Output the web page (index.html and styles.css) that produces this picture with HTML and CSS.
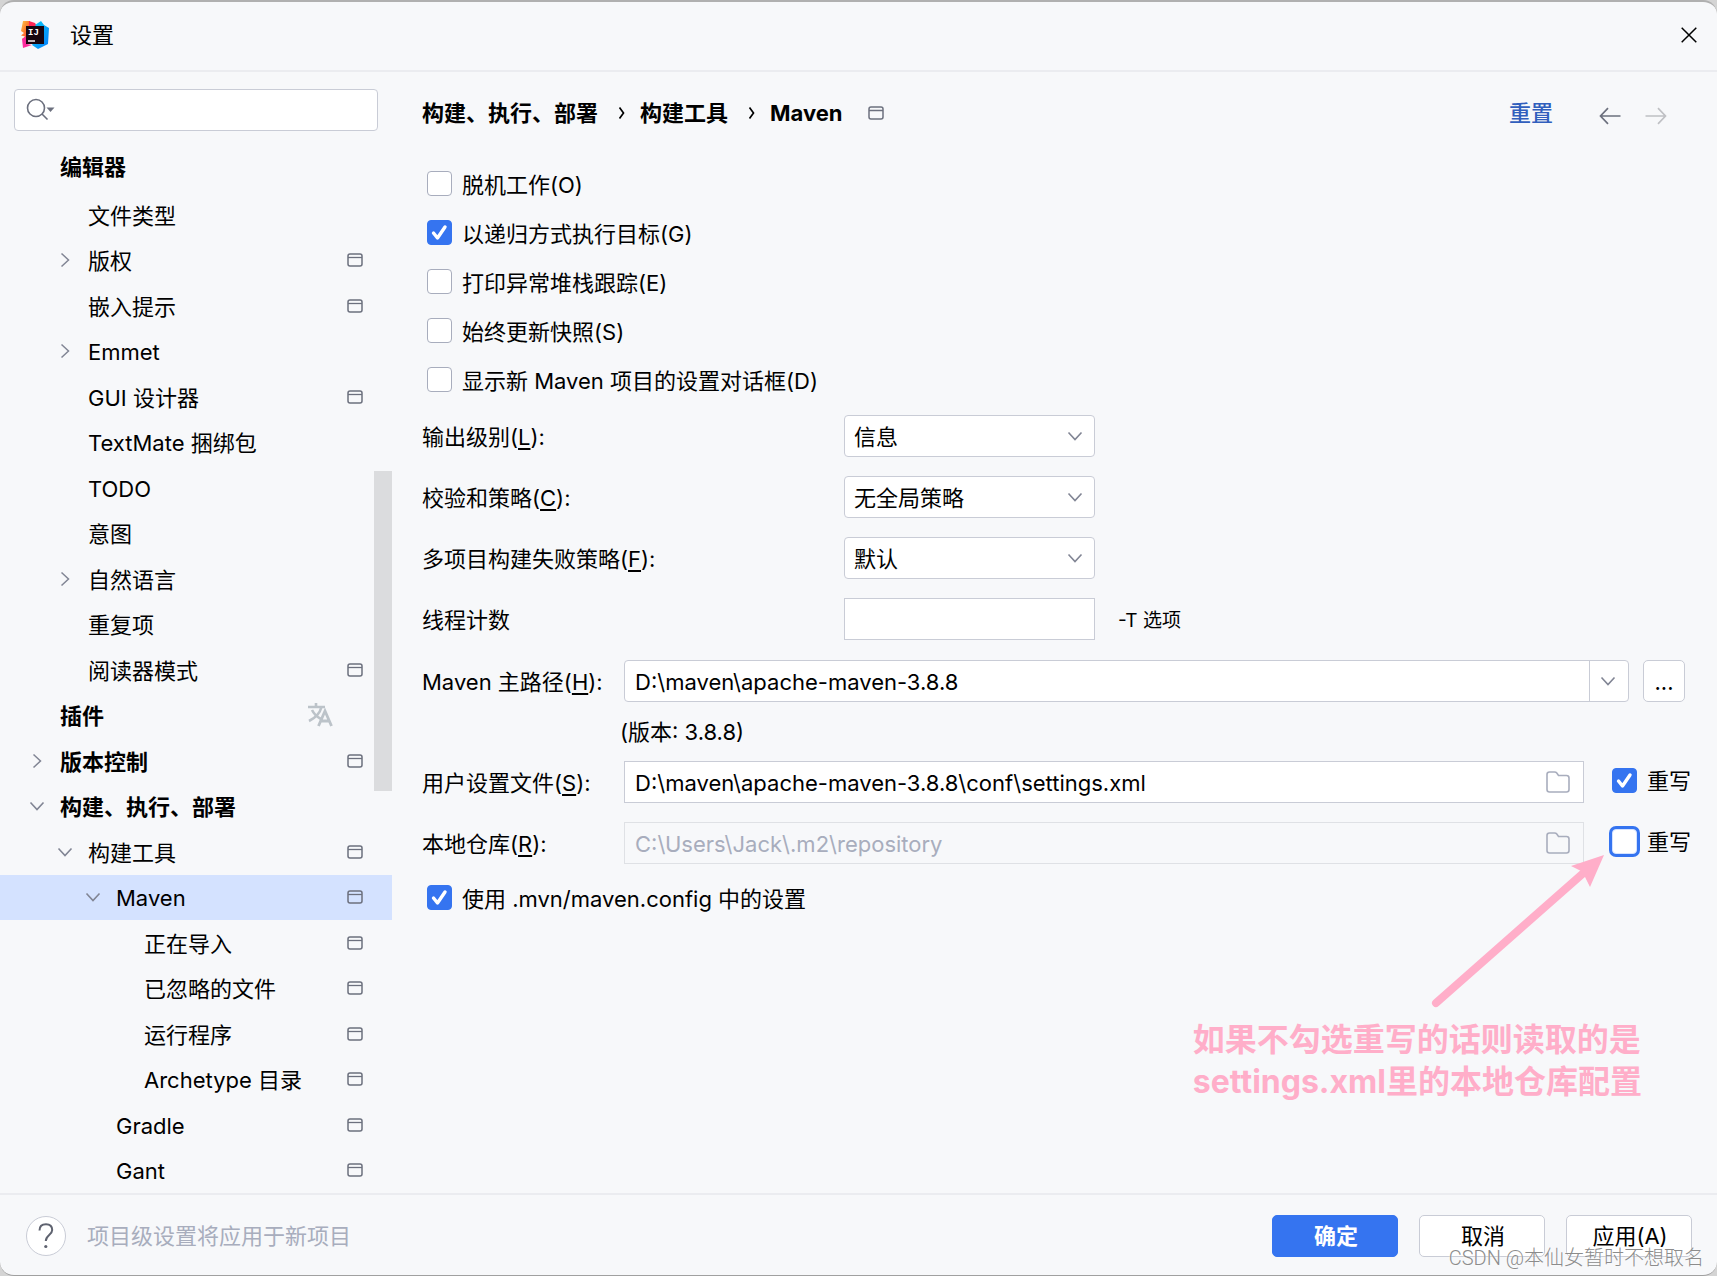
FILE: index.html
```html
<!DOCTYPE html>
<html lang="zh-CN">
<head>
<meta charset="utf-8">
<title>设置</title>
<link rel="stylesheet" href="styles.css">
</head>
<body>
<svg class="defs" aria-hidden="true">
  <symbol id="i-project" viewBox="0 0 16 14"><rect x="1" y="1" width="14" height="12" rx="2" fill="none" stroke="currentColor" stroke-width="1.5"/><path d="M1 4.500h14" stroke="currentColor" stroke-width="1.3"/></symbol>
  <symbol id="i-right" viewBox="0 0 16 16"><path d="M4.500 1.500l7 6.500-7 6.500" fill="none" stroke="currentColor" stroke-width="1.5"/></symbol>
  <symbol id="i-down" viewBox="0 0 16 16"><path d="M1.500 4.500l6.500 7 6.500-7" fill="none" stroke="currentColor" stroke-width="1.6"/></symbol>
  <symbol id="i-crumb" viewBox="0 0 8 14"><path d="M1.500 1.500l4 5.500-4 5.500" fill="none" stroke="currentColor" stroke-width="1.7"/></symbol>
  <symbol id="i-folder" viewBox="0 0 24 22"><path d="M1 3.500Q1 1 3.500 1H8.500Q10 1 10.800 2L12.500 4.500H20.500Q23 4.500 23 7V18.500Q23 21 20.500 21H3.500Q1 21 1 18.500Z" fill="none" stroke="currentColor" stroke-width="1.6"/></symbol>
</svg>

<div class="window">
  <header class="titlebar">
    <svg class="logo" viewBox="0 0 28 28" aria-hidden="true">
      <defs>
        <linearGradient id="lg-a" x1="0" y1="0" x2="1" y2="1"><stop offset="0" stop-color="#fdc94b"/><stop offset=".5" stop-color="#fc7a2e"/><stop offset="1" stop-color="#fe2857"/></linearGradient>
        <linearGradient id="lg-b" x1="0" y1="0" x2="1" y2="1"><stop offset="0" stop-color="#08d0f5"/><stop offset="1" stop-color="#077cfb"/></linearGradient>
      </defs>
      <path d="M2 0L9 0 9 6 6 18 1 18 4 15.500 0 14.500 3 12 0 10Z" fill="url(#lg-a)"/>
      <path d="M8 0L14 2 17 7 8 7Z" fill="#fe2857"/>
      <path d="M14 4L20 0 23 4 28 7 27 23 17 28 11 24 20 10Z" fill="url(#lg-b)"/>
      <path d="M1 18L6 15 6 23 11 24 2 27Z" fill="#fb2c9c"/>
      <rect x="5" y="5" width="18" height="18" fill="#17060f"/>
      <text x="7" y="14" class="logo-text">IJ</text>
      <rect x="7" y="19" width="7" height="2" fill="#bdb3b8"/>
    </svg>
    <h1 class="title">设置</h1>
    <button class="icon-btn close" type="button" aria-label="关闭"><svg width="16" height="16" viewBox="0 0 16 16"><path d="M.7.7l14.600 14.600M15.300.7L.7 15.300" stroke="#000" stroke-width="1.500"/></svg></button>
  </header>

  <div class="body">
    <aside class="sidebar">
      <label class="search">
        <svg width="30" height="24" viewBox="0 0 30 24"><circle cx="10" cy="10" r="8.500" fill="none" stroke="#6c707e" stroke-width="1.600"/><path d="M16 16l5.500 5.500" stroke="#6c707e" stroke-width="1.600"/><path d="M20.500 9.500h8l-4 4.500z" fill="#6c707e"/></svg>
        <input type="text" aria-label="搜索">
      </label>
      <nav class="tree" aria-label="设置类别">
        <div class="group"><span class="name">编辑器</span></div>
        <ul class="rows">
          <li class="row l1"><span class="tw"></span><span class="name">文件类型</span></li>
          <li class="row l1"><span class="tw"><svg class="chev"><use href="#i-right"/></svg></span><span class="name">版权</span><svg class="proj"><use href="#i-project"/></svg></li>
          <li class="row l1"><span class="tw"></span><span class="name">嵌入提示</span><svg class="proj"><use href="#i-project"/></svg></li>
          <li class="row l1"><span class="tw"><svg class="chev"><use href="#i-right"/></svg></span><span class="name">Emmet</span></li>
          <li class="row l1"><span class="tw"></span><span class="name">GUI 设计器</span><svg class="proj"><use href="#i-project"/></svg></li>
          <li class="row l1"><span class="tw"></span><span class="name">TextMate 捆绑包</span></li>
          <li class="row l1"><span class="tw"></span><span class="name">TODO</span></li>
          <li class="row l1"><span class="tw"></span><span class="name">意图</span></li>
          <li class="row l1"><span class="tw"><svg class="chev"><use href="#i-right"/></svg></span><span class="name">自然语言</span></li>
          <li class="row l1"><span class="tw"></span><span class="name">重复项</span></li>
          <li class="row l1"><span class="tw"></span><span class="name">阅读器模式</span><svg class="proj"><use href="#i-project"/></svg></li>
          <li class="row top"><span class="tw"></span><span class="name">插件</span><svg class="lang" viewBox="0 0 25 24"><path d="M0 4h17M8 0v4M13.500 4C12 10 7 15 1 18M4 7c2 4 5 7 9 9" fill="none" stroke="#bcc3c9" stroke-width="2.600"/><path d="M10.500 23L17 8l6.500 15M13 18h8.500" fill="none" stroke="#bcc3c9" stroke-width="2.800"/></svg></li>
          <li class="row top"><span class="tw"><svg class="chev"><use href="#i-right"/></svg></span><span class="name">版本控制</span><svg class="proj"><use href="#i-project"/></svg></li>
          <li class="row top"><span class="tw"><svg class="chev"><use href="#i-down"/></svg></span><span class="name">构建、执行、部署</span></li>
          <li class="row l1"><span class="tw"><svg class="chev"><use href="#i-down"/></svg></span><span class="name">构建工具</span><svg class="proj"><use href="#i-project"/></svg></li>
          <li class="row l2 selected"><span class="tw"><svg class="chev"><use href="#i-down"/></svg></span><span class="name">Maven</span><svg class="proj"><use href="#i-project"/></svg></li>
          <li class="row l3"><span class="tw"></span><span class="name">正在导入</span><svg class="proj"><use href="#i-project"/></svg></li>
          <li class="row l3"><span class="tw"></span><span class="name">已忽略的文件</span><svg class="proj"><use href="#i-project"/></svg></li>
          <li class="row l3"><span class="tw"></span><span class="name">运行程序</span><svg class="proj"><use href="#i-project"/></svg></li>
          <li class="row l3"><span class="tw"></span><span class="name">Archetype 目录</span><svg class="proj"><use href="#i-project"/></svg></li>
          <li class="row l2"><span class="tw"></span><span class="name">Gradle</span><svg class="proj"><use href="#i-project"/></svg></li>
          <li class="row l2"><span class="tw"></span><span class="name">Gant</span><svg class="proj"><use href="#i-project"/></svg></li>
        </ul>
        <div class="thumb"></div>
      </nav>
    </aside>

    <main class="main">
      <div class="head">
        <div class="crumbs">
          <span>构建、执行、部署</span><svg class="sep"><use href="#i-crumb"/></svg><span>构建工具</span><svg class="sep"><use href="#i-crumb"/></svg><span>Maven</span><svg class="proj"><use href="#i-project"/></svg>
        </div>
        <a class="reset" href="#">重置</a>
        <div class="history">
          <button class="icon-btn" type="button" aria-label="后退"><svg width="22" height="18" viewBox="0 0 22 18"><path d="M21.500 9H1.500M9 1.200L1.500 9 9 16.800" fill="none" stroke="#6c707e" stroke-width="1.700"/></svg></button>
          <button class="icon-btn" type="button" aria-label="前进" disabled><svg width="22" height="18" viewBox="0 0 22 18"><path d="M.5 9h20M13 1.200L20.500 9 13 16.800" fill="none" stroke="#bfc0c4" stroke-width="1.700"/></svg></button>
        </div>
      </div>

      <form class="form">
        <label class="check"><input type="checkbox"><span>脱机工作(O)</span></label>
        <label class="check"><input type="checkbox" checked><span>以递归方式执行目标(G)</span></label>
        <label class="check"><input type="checkbox"><span>打印异常堆栈跟踪(E)</span></label>
        <label class="check"><input type="checkbox"><span>始终更新快照(S)</span></label>
        <label class="check"><input type="checkbox"><span>显示新 Maven 项目的设置对话框(D)</span></label>

        <div class="fields">
          <div class="field short">
            <label for="level">输出级别(<u>L</u>):</label>
            <div class="select"><select id="level"><option>信息</option></select><svg class="chev"><use href="#i-down"/></svg></div>
          </div>
          <div class="field short">
            <label for="checksum">校验和策略(<u>C</u>):</label>
            <div class="select"><select id="checksum"><option>无全局策略</option></select><svg class="chev"><use href="#i-down"/></svg></div>
          </div>
          <div class="field short">
            <label for="fail">多项目构建失败策略(<u>F</u>):</label>
            <div class="select"><select id="fail"><option>默认</option></select><svg class="chev"><use href="#i-down"/></svg></div>
          </div>
          <div class="field short">
            <label for="threads">线程计数</label>
            <input class="box" id="threads" type="text">
            <span class="hint">-T 选项</span>
          </div>
        </div>
        <div class="fields paths">
          <div class="field path">
            <label for="home">Maven 主路径(<u>H</u>):</label>
            <div class="combo">
              <div class="box round"><input id="home" type="text" value="D:\maven\apache-maven-3.8.8"><button type="button" aria-label="展开"><svg class="chev"><use href="#i-down"/></svg></button></div>
              <button class="browse" type="button">...</button>
            </div>
          </div>
        </div>
        <p class="version">(版本: 3.8.8)</p>
        <div class="fields files">
          <div class="field file">
            <label for="settings">用户设置文件(<u>S</u>):</label>
            <div class="box"><input id="settings" type="text" value="D:\maven\apache-maven-3.8.8\conf\settings.xml"><svg class="folder"><use href="#i-folder"/></svg></div>
            <label class="override"><input type="checkbox" checked><span>重写</span></label>
          </div>
          <div class="field file">
            <label for="repo">本地仓库(<u>R</u>):</label>
            <div class="box off"><input id="repo" type="text" value="C:\Users\Jack\.m2\repository" disabled><svg class="folder"><use href="#i-folder"/></svg></div>
            <label class="override"><input class="focused" type="checkbox"><span>重写</span></label>
          </div>
        </div>
        <label class="check last"><input type="checkbox" checked><span>使用 .mvn/maven.config 中的设置</span></label>
      </form>

      <div class="note">
        <svg class="arrow" viewBox="0 0 176 156" aria-hidden="true"><path d="M6 150L158 16" stroke="#ffaec9" stroke-width="8" stroke-linecap="round"/><path d="M174 2L141 13 151 18 155 24 160 34Z" fill="#ffaec9"/></svg>
        <p>如果不勾选重写的话则读取的是<br>settings.xml里的本地仓库配置</p>
      </div>
    </main>
  </div>

  <footer class="footer">
    <button class="help" type="button" aria-label="帮助"><svg width="16" height="26" viewBox="0 0 16 26"><path d="M1.500 7.500C1.500 3.500 4 1.200 8 1.200s6.200 2.400 6.200 5.800c0 5-6.400 5.200-6.400 11" fill="none" stroke="#5f6370" stroke-width="2"/><circle cx="7.800" cy="23.500" r="1.600" fill="#5f6370"/></svg></button>
    <span class="status">项目级设置将应用于新项目</span>
    <button class="btn primary" type="button">确定</button>
    <button class="btn" type="button">取消</button>
    <button class="btn" type="button">应用(A)</button>
  </footer>
  <div class="watermark">CSDN @本仙女暂时不想取名</div>
</div>
</body>
</html>
```

FILE: styles.css
```css
:root {
  --bg: #f7f8fa;
  --line: #ebecf0;
  --border: #c9ccd6;
  --icon: #6c707e;
  --blue: #3574f0;
  --muted: #a8adbd;
}

* { box-sizing: border-box; }

body {
  margin: 0;
  background: #d4d4d4;
  color: #000;
  font: 22px/32px Inter, "Noto Sans CJK SC", sans-serif;
}

button, input, select { font: inherit; color: inherit; }
button { padding: 0; }
h1, p, ul { margin: 0; padding: 0; font: inherit; }
.defs { display: none; }

.window {
  position: relative;
  display: flex;
  flex-direction: column;
  height: 100vh;
  min-height: 1000px;
  overflow: hidden;
  background: var(--bg);
  border-top: 2px solid #b0b0b0;
  border-bottom: 1px solid #a0a0a0;
  border-radius: 14px;
}

/* title bar */
.titlebar {
  display: flex;
  align-items: center;
  height: 70px;
  padding: 0 20px 2px 21px;
  border-bottom: 2px solid var(--line);
}
.logo { width: 28px; height: 28px; }
.logo-text { font: bold 9px "Liberation Mono", monospace; fill: #fff; }
.title { margin-left: 21px; }
.icon-btn { display: flex; border: 0; background: none; }
.close { margin-left: auto; }

.body { display: flex; flex: 1; min-height: 0; }

/* sidebar */
.sidebar { display: flex; flex-direction: column; width: 392px; }
.search {
  display: flex;
  align-items: center;
  height: 42px;
  margin: 17px 14px 0;
  padding: 0 11px;
  background: #fff;
  border: 1px solid var(--border);
  border-radius: 4px;
}
.search input { flex: 1; min-width: 0; border: 0; outline: 0; background: none; }
.tree {
  position: relative;
  display: flex;
  flex: 1;
  flex-direction: column;
  min-height: 0;
  padding-top: 11px;
}
.group { height: 50px; padding-left: 60px; line-height: 50px; font-weight: 700; }
.rows { display: flex; flex: 1; flex-direction: column; list-style: none; }
.row { display: flex; flex: 1; align-items: center; padding: 0 29px 0 23px; }
.l1 { padding-left: 51px; }
.l2 { padding-left: 79px; }
.l3 { padding-left: 107px; }
.top .name { font-weight: 700; }
.selected { background: #d4e2ff; }
.tw { display: flex; justify-content: center; width: 28px; margin-right: 9px; }
.name { flex: 1; white-space: nowrap; }
.row .name, .check span, .field > label:first-child { padding-top: 2px; }
.chev { width: 16px; height: 16px; color: #818594; }
.proj { width: 16px; height: 14px; color: var(--icon); }
.lang { width: 25px; height: 24px; margin-right: 30px; }
.thumb {
  position: absolute;
  top: 32%;
  right: 0;
  width: 18px;
  height: 320px;
  background: rgba(0, 0, 0, .11);
}

/* settings page */
.main { position: relative; flex: 1; min-width: 0; padding: 0 25px 0 30px; }
.head { display: flex; align-items: center; height: 82px; padding-right: 25px; }
.crumbs { display: flex; flex: 1; align-items: center; font-weight: 700; }
.sep { width: 8px; height: 14px; margin: 0 14px 0 20px; }
.crumbs .proj { margin-left: 25px; }
.reset { color: #315fbd; font-weight: 500; text-decoration: none; }
.history { display: flex; gap: 24px; margin-left: 46px; padding-top: 5px; }

.form { display: flex; flex-direction: column; padding-top: 5px; }
.check { display: flex; align-items: center; height: 49px; padding-left: 5px; }
.last { margin-top: 9px; }

input[type="checkbox"] {
  flex: none;
  appearance: none;
  width: 25px;
  height: 25px;
  margin: 0 10px 0 0;
  background: #fff;
  border: 1px solid #a8adbd;
  border-radius: 4px;
}
input[type="checkbox"]:checked {
  border-color: var(--blue);
  background: var(--blue) url("data:image/svg+xml,%3Csvg xmlns='http://www.w3.org/2000/svg' viewBox='0 0 25 25'%3E%3Cpath d='M6.500 13l4 5L18 7' fill='none' stroke='white' stroke-width='3.400' stroke-linecap='round' stroke-linejoin='round'/%3E%3C/svg%3E") center / 25px 25px;
}
input[type="checkbox"].focused { border-color: #d4e2ff; box-shadow: 0 0 0 3px var(--blue); }

.fields { display: flex; flex-direction: column; gap: 19px; margin-top: 11px; }
.field { display: grid; align-items: center; height: 42px; }
.short { grid-template-columns: 422px 251px 1fr; }
.path { grid-template-columns: 202px 1fr; }
.file { grid-template-columns: 202px 1fr 108px; }
.field u { text-underline-offset: 3px; }

.box, .select select {
  display: flex;
  align-items: center;
  width: 100%;
  min-width: 0;
  height: 42px;
  padding: 0 10px;
  background: #fff;
  border: 1px solid var(--border);
  border-radius: 0;
}
.box input { flex: 1; min-width: 0; height: 34px; padding: 2px 0 0; border: 0; background: none; }
.select { display: grid; align-items: center; }
.select > * { grid-area: 1 / 1; }
.select select { appearance: none; padding: 1px 9px 0; border-radius: 4px; }
.select .chev { justify-self: end; margin-right: 12px; pointer-events: none; }
.hint { padding: 3px 0 0 23px; font-size: 19px; }

.combo { display: flex; gap: 14px; padding-right: 7px; }
.round { flex: 1; border-radius: 4px; padding-right: 0; }
.round button {
  display: flex;
  align-items: center;
  justify-content: center;
  width: 39px;
  height: 40px;
  padding-right: 2px;
  border: 0;
  border-left: 1px solid var(--border);
  background: none;
}
.browse {
  width: 42px;
  height: 42px;
  padding-top: 2px;
  background: #fff;
  border: 1px solid var(--border);
  border-radius: 5px;
}

.paths { margin-top: 20px; }
.version { height: 59px; padding-left: 198px; line-height: 60px; }
.files { margin-top: 0; }
.folder { width: 24px; height: 22px; margin-right: 3px; color: #a8adbd; }
.off { background: none; border-color: #dfe1e5; color: var(--muted); }
.override { display: flex; align-items: center; padding: 0 0 3px 28px; white-space: nowrap; }

/* annotation over the page */
.note { position: absolute; right: 75px; bottom: 90px; color: #ffaec9; }
.note p { font-size: 32px; line-height: 42px; font-weight: 700; white-space: nowrap; }
.arrow { display: block; width: 176px; height: 156px; margin: 0 0 10px 237px; }

/* footer */
.footer {
  display: flex;
  align-items: center;
  gap: 21px;
  height: 82px;
  padding: 1px 25px 0 26px;
  border-top: 2px solid var(--line);
}
.help {
  display: flex;
  align-items: center;
  justify-content: center;
  width: 40px;
  height: 40px;
  background: #fff;
  border: 1px solid var(--border);
  border-radius: 50%;
}
.status { flex: 1; color: var(--muted); }
.btn {
  width: 126px;
  height: 42px;
  padding: 1px 0 0 2px;
  background: #fff;
  border: 1px solid var(--border);
  border-radius: 5px;
}
.primary { background: var(--blue); border-color: var(--blue); color: #fff; font-weight: 700; }

.watermark {
  position: absolute;
  right: 13px;
  bottom: 1px;
  color: #8c8c8c;
  font-family: Roboto, "Noto Sans CJK SC", sans-serif;
  font-size: 20px;
  font-weight: 300;
  text-shadow: 0 0 2px #fff;
}
```
